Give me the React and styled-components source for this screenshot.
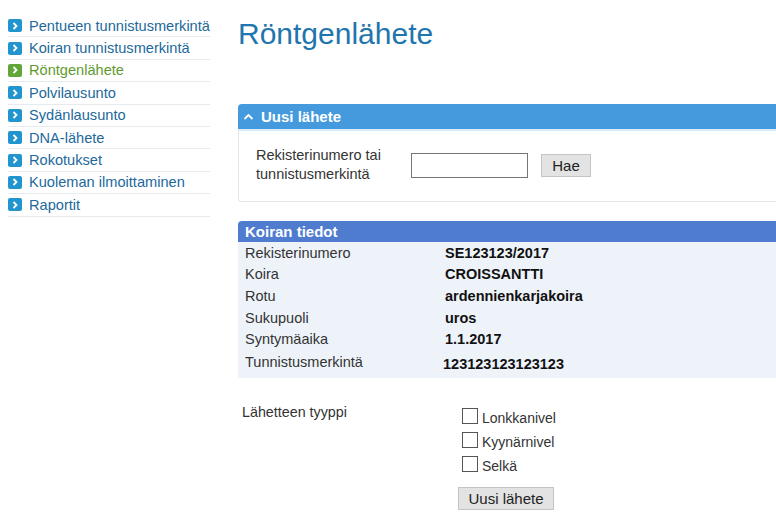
import React from 'react';
import styled, { createGlobalStyle } from 'styled-components';

const GlobalStyle = createGlobalStyle`
    html, body {
        margin: 0;
        padding: 0;
        background: #fff;
        overflow: hidden;
    }
    body {
        font-family: "Liberation Sans", Arial, sans-serif;
    }
`;

const Page = styled.div`
    display: flex;
    width: 776px;
    height: 526px;
    overflow: hidden;
    color: #333;
`;

const Sidebar = styled.ul`
    flex: none;
    width: 202px;
    margin: 15px 0 0 8px;
    padding: 0;
    list-style: none;
`;

const NavItem = styled.li`
    display: flex;
    align-items: center;
    gap: 7px;
    height: 21.4px;
    border-bottom: 1px solid #e6ebee;
    font-size: 14.6px;
    white-space: nowrap;
    color: ${props => props.$active ? '#5f9a2e' : '#22699a'};
`;

const NavIcon = styled.span`
    display: flex;
    align-items: center;
    justify-content: center;
    flex: none;
    width: 14px;
    height: 13px;
    border-radius: 2px;
    background: ${props => props.$active ? '#62a63a' : '#2295cf'};
`;

const Main = styled.main`
    flex: none;
    width: 560px;
    margin-left: 28px;
`;

const Title = styled.h1`
    margin: 16px 0 0;
    height: 88px;
    font-size: 30px;
    line-height: 36px;
    font-weight: 400;
    color: #1f75ad;
`;

const Panel = styled.section`
    border: 1px solid #e2e5e8;
    border-top: 0;
    border-radius: 4px 0 0 4px;
    height: 98px;
    box-sizing: border-box;
`;

const PanelHeader = styled.h2`
    display: flex;
    align-items: center;
    gap: 7px;
    margin: 0 0 0 -1px;
    padding-left: 5px;
    height: 25px;
    border-radius: 4px 0 0 0;
    border-bottom: 2px solid #d8ecfa;
    box-sizing: content-box;
    background: #459ade;
    color: #fff;
    font-size: 15px;
    font-weight: 700;
`;

const SearchRow = styled.div`
    display: flex;
    align-items: center;
    padding: 15px 0 0 17px;
`;

const SearchLabel = styled.label`
    width: 155px;
    font-size: 14.5px;
    line-height: 19px;
`;

const TextBox = styled.input`
    width: 117px;
    height: 25px;
    padding: 0;
    box-sizing: border-box;
    border: 1px solid #767676;
    background: #fff;
`;

const Button = styled.button`
    display: block;
    height: 23px;
    padding: 0;
    width: ${props => props.$width}px;
    margin-left: ${props => props.$left}px;
    margin-top: ${props => props.$top || 0}px;
    box-sizing: border-box;
    border: 1px solid #c4c4c4;
    background: #e3e3e3;
    color: #222;
    font-family: inherit;
    font-size: 15px;
`;

const InfoCard = styled.section`
    margin-top: 19px;
    height: 157px;
    background: #eef3fa;
    border-radius: 4px 0 0 0;
`;

const InfoHeader = styled.h2`
    display: flex;
    align-items: center;
    margin: 0;
    padding-left: 7px;
    height: 21px;
    border-radius: 4px 0 0 0;
    background: #4f7ccf;
    color: #fff;
    font-size: 15px;
    font-weight: 700;
`;

const InfoRow = styled.div`
    display: grid;
    grid-template-columns: 200px 1fr;
    align-items: center;
    height: ${props => props.$tall ? '24px' : '21.6px'};
    padding-left: 7px;
    font-size: 14.5px;
`;

const InfoValue = styled.span`
    font-weight: 700;
    color: #111;
    padding-top: ${props => props.$low ? '5px' : '0'};
    margin-left: ${props => props.$low ? '-2px' : '0'};
`;

const TypeRow = styled.div`
    display: grid;
    grid-template-columns: 219px 1fr;
    margin-top: 26px;
`;

const TypeLabel = styled.span`
    padding-left: 4px;
    font-size: 14.3px;
`;

const Options = styled.div`
    display: flex;
    flex-direction: column;
    gap: 7.8px;
    padding-top: 6px;
    padding-left: 5px;
`;

const Option = styled.label`
    display: flex;
    align-items: center;
    gap: 4px;
    height: 16px;
    font-size: 14px;
`;

const Check = styled.input`
    appearance: none;
    width: 16px;
    height: 16px;
    margin: -4px 0 0;
    border: 1px solid #555;
    background: #fff;
    box-sizing: border-box;
`;

const Chevron = ({ color = '#fff' }) => (
    <svg width="8" height="8" viewBox="0 0 8 8" fill="none">
        <path d="M2.5 1L5.5 4L2.5 7" stroke={color} strokeWidth="1.8" />
    </svg>
);

const nav = [
    'Pentueen tunnistusmerkintä',
    'Koiran tunnistusmerkintä',
    'Röntgenlähete',
    'Polvilausunto',
    'Sydänlausunto',
    'DNA-lähete',
    'Rokotukset',
    'Kuoleman ilmoittaminen',
    'Raportit',
];

const info = [
    ['Rekisterinumero', 'SE123123/2017'],
    ['Koira', 'CROISSANTTI'],
    ['Rotu', 'ardennienkarjakoira'],
    ['Sukupuoli', 'uros'],
    ['Syntymäaika', '1.1.2017'],
];

export default function App() {
    return (
        <>
            <GlobalStyle />
            <Page>
                <Sidebar>
                    {nav.map(item => {
                        const active = item === 'Röntgenlähete';
                        return (
                            <NavItem key={item} $active={active}>
                                <NavIcon $active={active}><Chevron /></NavIcon>
                                {item}
                            </NavItem>
                        );
                    })}
                </Sidebar>
                <Main>
                    <Title>Röntgenlähete</Title>
                    <Panel>
                        <PanelHeader>
                            <svg width="11" height="8" viewBox="0 0 11 8" fill="none">
                                <path d="M1.5 6L5.5 2L9.5 6" stroke="#fff" strokeWidth="1.8" />
                            </svg>
                            Uusi lähete
                        </PanelHeader>
                        <SearchRow>
                            <SearchLabel>Rekisterinumero tai tunnistusmerkintä</SearchLabel>
                            <TextBox type="text" />
                            <Button type="button" $width={50} $left={13}>Hae</Button>
                        </SearchRow>
                    </Panel>
                    <InfoCard>
                        <InfoHeader>Koiran tiedot</InfoHeader>
                        {info.map(([label, value]) => (
                            <InfoRow key={label}>
                                <span>{label}</span>
                                <InfoValue>{value}</InfoValue>
                            </InfoRow>
                        ))}
                        <InfoRow $tall>
                            <span>Tunnistusmerkintä</span>
                            <InfoValue $low>123123123123123</InfoValue>
                        </InfoRow>
                    </InfoCard>
                    <TypeRow>
                        <TypeLabel>Lähetteen tyyppi</TypeLabel>
                        <div>
                            <Options>
                                <Option><Check type="checkbox" />Lonkkanivel</Option>
                                <Option><Check type="checkbox" />Kyynärnivel</Option>
                                <Option><Check type="checkbox" />Selkä</Option>
                            </Options>
                            <Button type="button" $width={96} $left={1} $top={13}>Uusi lähete</Button>
                        </div>
                    </TypeRow>
                </Main>
            </Page>
        </>
    );
}
